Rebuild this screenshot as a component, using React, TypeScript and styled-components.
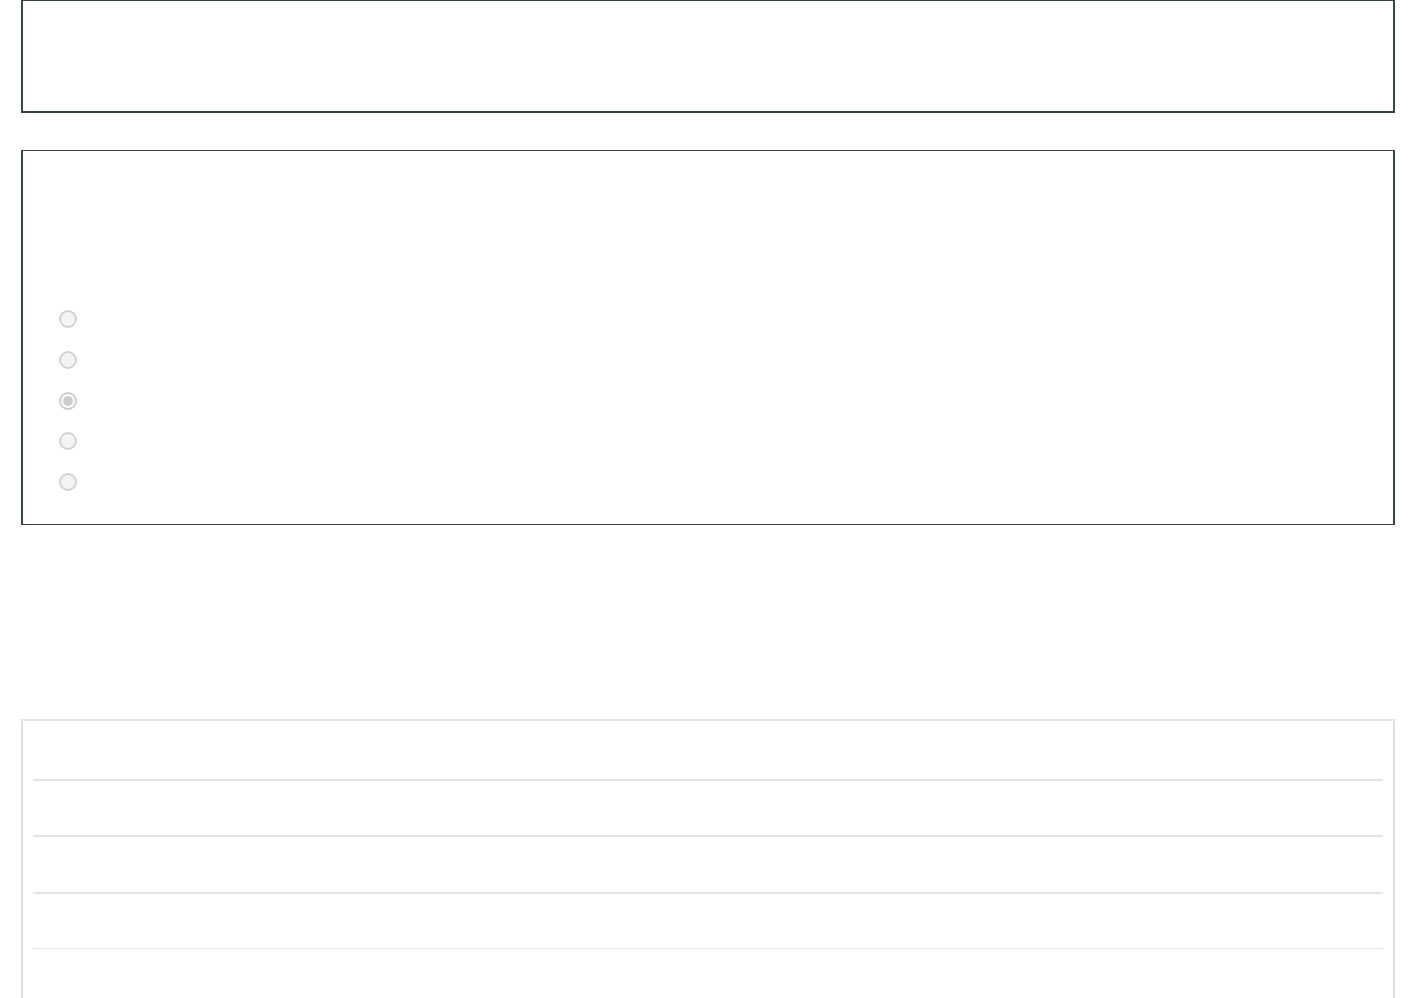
import React from "react";
import styled, { createGlobalStyle } from "styled-components";

const Global = createGlobalStyle`
  html, body { margin: 0; padding: 0; background: #ffffff; overflow: hidden; }
  body { font-family: "Liberation Sans", Arial, sans-serif; color: #ffffff; }
`;

const Page = styled.div`
  display: flex;
  flex-direction: column;
  padding: 0 21px;
  height: 998px;
  box-sizing: border-box;
`;

const HeaderBox = styled.section`
  flex-shrink: 0;
  margin-top: -1px;
  height: 114px;
  box-sizing: border-box;
  border: 2px solid #36434b;
`;

const QuestionBox = styled.section`
  flex-shrink: 0;
  margin-top: 37px;
  box-sizing: border-box;
  height: 375px;
  border-style: solid;
  border-color: #36434b;
  border-width: 1px 2px;
  padding: 159px 0 0 36px;
`;

const OptionList = styled.div`
  display: flex;
  flex-direction: column;
  gap: 22.75px;
`;

const Radio = styled.input.attrs({ type: "radio", disabled: true })`
  appearance: none;
  -webkit-appearance: none;
  margin: 0;
  width: 18px;
  height: 18px;
  box-sizing: border-box;
  border-radius: 50%;
  border: 2px solid #d2d2d2;
  background: #f4f4f4;
  display: grid;
  place-items: center;
  &:checked {
    background: #ffffff;
    border-color: #cdcdcd;
  }
  &:checked::after {
    content: "";
    width: 10px;
    height: 10px;
    border-radius: 50%;
    background: #cbcbcb;
  }
`;

const TableBox = styled.section`
  margin-top: 194px;
  flex: 1;
  min-height: 0;
  box-sizing: border-box;
  border: 2px solid #dfe2e5;
  border-bottom: none;
  padding: 0 10px;
  display: flex;
  flex-direction: column;
  overflow: hidden;
`;

const Row = styled.div<{ $h: number; $line: number }>`
  height: ${(p) => p.$h}px;
  flex-shrink: 0;
  border-bottom: ${(p) => p.$line}px solid #e0e2e5;
`;

const rows = [
  { h: 58, line: 2 },
  { h: 54, line: 2 },
  { h: 55, line: 2 },
  { h: 54, line: 1 },
  { h: 60, line: 0 },
];

export default function App() {
  return (
    <>
      <Global />
      <Page>
        <HeaderBox />
        <QuestionBox>
          <OptionList>
            {[0, 1, 2, 3, 4].map((i) => (
              <Radio key={i} name="q" defaultChecked={i === 2} />
            ))}
          </OptionList>
        </QuestionBox>
        <TableBox>
          {rows.map((r, i) => (
            <Row key={i} $h={r.h} $line={r.line} />
          ))}
        </TableBox>
      </Page>
    </>
  );
}
